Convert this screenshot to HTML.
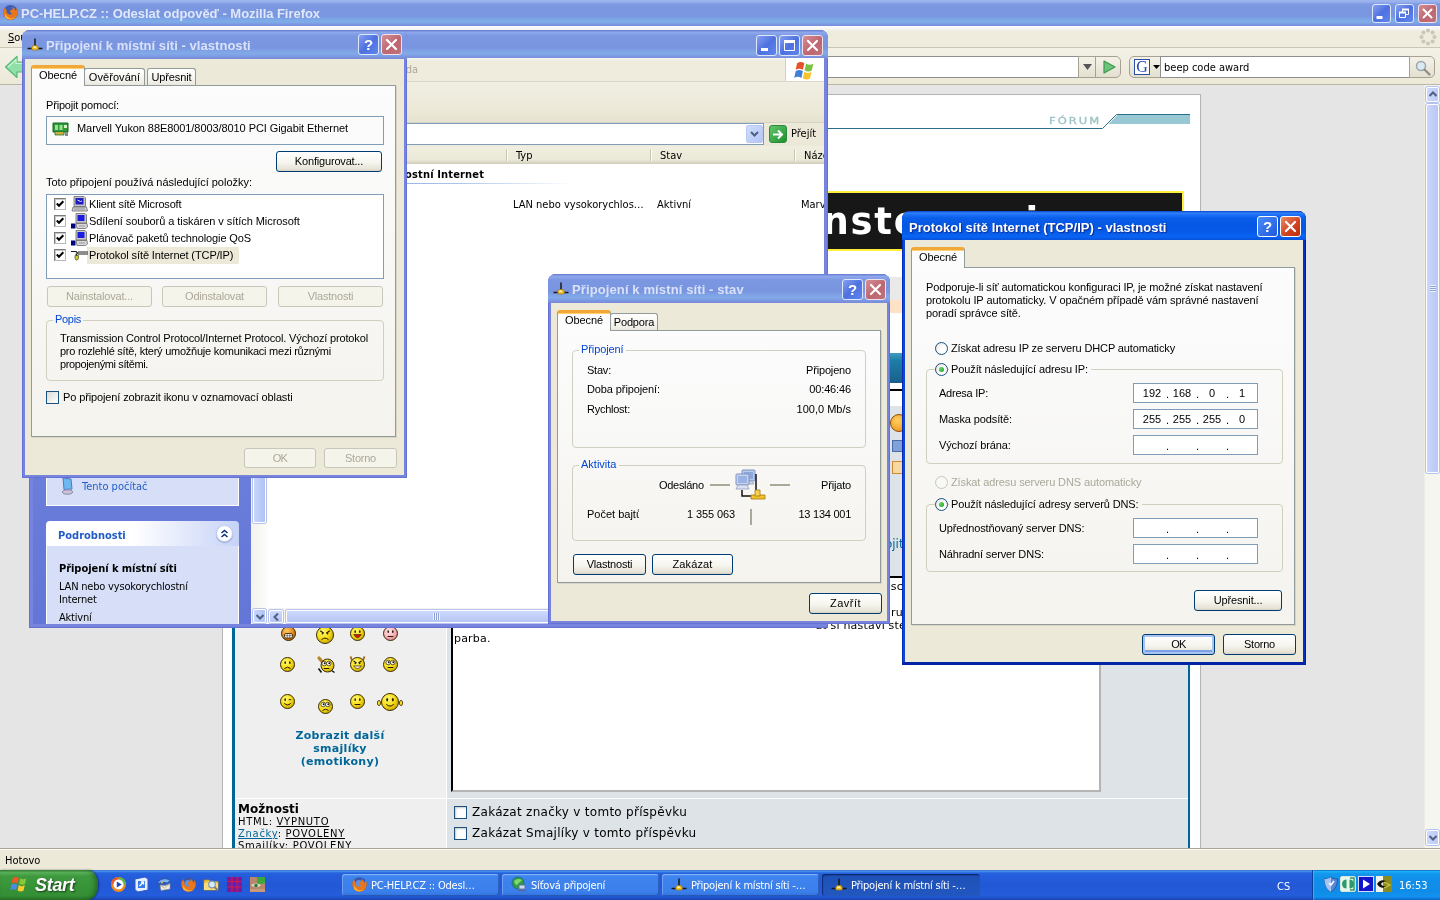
<!DOCTYPE html>
<html lang="cs">
<head>
<meta charset="utf-8">
<title>PC-HELP.CZ :: Odeslat odpověď - Mozilla Firefox</title>
<style>
*{box-sizing:border-box;margin:0;padding:0}
html,body{width:1440px;height:900px;overflow:hidden;background:#e5e5e5}
body{position:relative;font:11px "Liberation Sans",sans-serif;color:#000}
.a{position:absolute}
.t{position:absolute;white-space:nowrap;line-height:13px}
.tah{font-family:"DejaVu Sans Condensed","DejaVu Sans","Liberation Sans",sans-serif;font-size:11px}
.ver{font-family:"DejaVu Sans","Liberation Sans",sans-serif}
/* ---------- firefox ---------- */
#fftitle{left:0;top:0;width:1440px;height:26px;background:linear-gradient(#9db6ee 0,#98b1ec 2px,#7e9ae3 4px,#7b97e0 8px,#7a96e0 16px,#7ca6e6 19px,#7eade8 22px,#7c9ae2 24px,#7a8cdc 26px)}
#fftitle .cap{left:21px;top:5.500px;font:bold 13px/16px "Liberation Sans",sans-serif;color:#dfe7fa;letter-spacing:-.04px}
#ffmenu{left:0;top:26px;width:1440px;height:22px;background:linear-gradient(#fbfcfe 0,#f5f6f4 3px,#efecde 5px,#efecde 100%);border-bottom:1px solid #c9c6b8}
#fftool{left:0;top:48px;width:1440px;height:37px;background:linear-gradient(#f3f1e7,#ece9d8);border-bottom:1px solid #b9b6a7}
#ffcontent{left:0;top:85px;width:1424px;height:763px;background:#e5e5e5;overflow:hidden}
#ffscroll{left:1424px;top:85px;width:16px;height:763px;background:#f6f6f1;border-left:1px solid #eeede5}
#ffstatus{left:0;top:848px;width:1440px;height:22px;background:#ece9d8;border-top:1px solid #a9a698;box-shadow:inset 0 1px 0 #fbfaf5}
/* ---------- taskbar ---------- */
#taskbar{left:0;top:870px;width:1440px;height:30px;background:linear-gradient(#3168d5 0,#4993e6 4%,#2663e0 10%,#245ddb 20%,#2258d6 50%,#245ddb 85%,#1f4fc4 95%,#1941a5 100%)}
#start{left:0;top:0;width:98px;height:30px;border-radius:0 10px 10px 0/0 15px 15px 0;background:linear-gradient(#3c8a3c 0,#5bb55b 8%,#3f9a3f 20%,#379337 60%,#358f35 85%,#2b7a2b 100%);box-shadow:inset -3px 0 4px rgba(0,40,0,.35),1px 0 2px rgba(0,0,60,.5)}
#start .cap{left:35px;top:5px;font:italic bold 18px/20px "Liberation Sans",sans-serif;color:#fff;text-shadow:1px 1px 2px rgba(0,0,0,.6);letter-spacing:-.3px}
.task{position:absolute;top:4px;height:22px;border-radius:3px;background:linear-gradient(#5a9bf5 0,#3f84ee 12%,#3a7fea 80%,#3373de 100%);box-shadow:inset 1px 1px 0 rgba(255,255,255,.25),inset -1px -1px 0 rgba(0,0,60,.25);color:#fff}
.task.on{background:linear-gradient(#19449f 0,#1f52b8 15%,#2257c0 100%);box-shadow:inset 1px 1px 1px rgba(0,0,40,.5)}
.task .cap{left:29px;top:5px;color:#fff;letter-spacing:-.2px}
#tray{left:1312px;top:0;width:128px;height:30px;background:linear-gradient(#0c59b9 0,#19b0f5 5%,#1398ee 12%,#108fea 30%,#0f8ce8 70%,#1192ee 90%,#0a5fc0 100%);box-shadow:inset 1px 0 0 #0a3f9a,inset 2px 0 1px rgba(120,200,255,.5)}

/* ---------- XP windows ---------- */
.win{position:absolute;border-radius:8px 8px 0 0}
.win.in{background:#7684de;box-shadow:inset 0 0 0 1px #6672d2}
.win.ac{background:linear-gradient(90deg,#0d47dc 0,#0d47dc 50%,#0431c4 50%);box-shadow:inset 0 -3px 0 #0324a6,inset 1px 0 0 #0a2cb4,inset -1px 0 0 #001e98}
.tb{position:absolute;left:0;top:0;right:0;height:29px;border-radius:8px 8px 0 0}
.in .tb{background:linear-gradient(#6e83d6 0,#6e83d6 1px,#8fa9ec 2px,#86a1e8 4px,#7b97e1 6px,#7a95e0 18px,#7fa4e6 21px,#82a9e8 24px,#7d9ae4 26px,#7a8edc 28px,#788bda 29px)}
.ac .tb{background:linear-gradient(#0842c8 0,#2f80f8 7%,#1a6ef6 14%,#0a5fea 24%,#0558e4 45%,#0559e6 70%,#0a64f4 88%,#0753dc 100%)}
.tb .cap{position:absolute;top:7px;font:bold 13px/16px "Liberation Sans",sans-serif;white-space:nowrap}
.in .tb .cap{color:#d9e2f8}
.ac .tb .cap{color:#fff;text-shadow:1px 1px 1px #0a2a90}
.wb{position:absolute;left:3px;top:29px;right:3px;bottom:3px;background:#ece9d8}
.cb{position:absolute;width:21px;height:21px;border-radius:3px;border:1px solid #fff}
.in .cb{background:linear-gradient(135deg,#86a0f0 0,#4e71e0 50%,#5f86ec 100%);border-color:#dfe7fb}
.in .cb.x{background:linear-gradient(135deg,#d58e96 0,#bd6670 55%,#c0727c 100%);border-color:#f1e2ea}
.ac .cb{background:linear-gradient(135deg,#4b8cf8,#1f58dc)}
.ac .cb.x{background:linear-gradient(135deg,#ec8a6a,#d0401e 60%,#b8300f)}
.cb svg{position:absolute;left:0;top:0}
/* dialog widgets */
.pane{position:absolute;background:linear-gradient(#fcfcfd,#f4f3ee);border:1px solid #919b9c;box-shadow:1px 1px 0 #d8d5c6}
.tab{position:absolute;border:1px solid #919b9c;border-bottom:none;border-radius:3px 3px 0 0;background:linear-gradient(#fff,#f3f2ec 70%,#e9e7dc);text-align:center;line-height:14px}
.tab.sel{background:#fcfcfd;border-top:3px solid #f2a838;box-shadow:inset 0 1px 0 #ffd070;z-index:2}
.btn{position:absolute;border:1px solid #003c74;border-radius:3px;background:linear-gradient(#fff 0,#f6f5ee 55%,#e6e3d6 90%,#d6d0c4 100%);text-align:center;white-space:nowrap}
.btn.dis{border-color:#c9c7ba;background:#f5f4ea;color:#aca899}
.btn.def{box-shadow:inset 0 0 0 2px #a9c3f3,inset 0 -2px 0 2px #7da2e8}
.grp{position:absolute;border:1px solid #d0d0bf;border-radius:4px}
.gl{position:absolute;white-space:nowrap;line-height:13px;color:#0046d5;padding:0 2px}
.fld{position:absolute;border:1px solid #7f9db9;background:#fff}
.chk{position:absolute;width:13px;height:13px;border:1px solid #1c5180;background:linear-gradient(135deg,#dcdcd7,#fff)}
.rad{position:absolute;width:13px;height:13px;border-radius:50%;border:1px solid #1c5180;background:radial-gradient(circle at 65% 65%,#fff 30%,#dcdcd7)}
.rad.on::after{content:"";position:absolute;left:3px;top:3px;width:5px;height:5px;border-radius:50%;background:radial-gradient(circle at 35% 35%,#5fd35f,#1f9a1f)}
.rad.dis{border-color:#cac8bb;background:#f8f8f5}

/* ---------- firefox toolbar + page ---------- */
.ffbox{position:absolute;top:56px;height:22px;border:1px solid #8e8f8f;background:#fff}
.ffb{position:absolute;top:56px;height:22px;border:1px solid #a5a293;background:linear-gradient(#f4f2e8,#e3e0d0)}
#page{left:222px;top:9px;width:979px;height:760px;background:#fff;border:1px solid #b4b4b4;border-bottom:none}

/* ---------- explorer ---------- */
.sb{position:absolute;border-radius:2px;background:linear-gradient(90deg,#c6d5fc,#b9caf8 60%,#b0c1f3);border:1px solid #fff;box-shadow:0 0 0 1px #b4c3ee}
.sbh{background:linear-gradient(#cdd9fb,#c0cdf8 60%,#b7c5f3)}
.colh{position:absolute;top:146px;height:18px;background:linear-gradient(#efeee0 0,#ebead8 75%,#dedbca 88%,#cfcbb8 100%)}
</style>
</head>
<body>
<div id="root" style="position:absolute;left:0;top:0;width:1440px;height:900px;will-change:transform">
<!-- ================= FIREFOX WINDOW ================= -->
<div id="fftitle" class="a in">
  <svg class="a" style="left:2px;top:4px" width="17" height="17" viewBox="0 0 17 17"><circle cx="8.5" cy="8.5" r="7.5" fill="#3a5fb8"/><path d="M1 8.5a7.5 7.5 0 0 0 15 0c0-2-.6-3.6-1.6-4.8.3 1.500-.2 2.600-.8 3.200-.2-2-1.600-3.400-3.600-3.900 1 1 .9 2.200.2 2.800-1.200-.2-2.200.500-2.200 1.700 0 1.300 1.300 1.800 2.300 1.500-.5 1.300-2.200 1.900-3.700 1.200-1.600-.8-2.300-2.500-1.900-4.300C3.200 5.300 3 4 3.600 2.800 2 4.200 1 6.200 1 8.500z" fill="#e8761c"/><path d="M3.500 13.500a7.500 7.500 0 0 0 10.500-.5c-2 1.500-5 2-7.500.5-1.500-1-2.600-2.400-3-4 -.6 1.500-.6 2.800 0 4z" fill="#f7b63a"/></svg>
  <div class="t cap">PC-HELP.CZ :: Odeslat odpověď - Mozilla Firefox</div>
  <div class="cb" style="left:1372px;top:4px;width:19px;height:19px"><svg width="17" height="17"><rect x="3.500" y="11" width="6" height="3" fill="#fff"/></svg></div>
  <div class="cb" style="left:1395px;top:4px;width:19px;height:19px"><svg width="17" height="17"><path d="M6.500 4.500h6v5h-6z" fill="none" stroke="#fff" stroke-width="1"/><path d="M6 4.500h7" stroke="#fff" stroke-width="2"/><path d="M3.500 7.500h6v5h-6z" fill="#5577e2" stroke="#fff" stroke-width="1"/><path d="M3 7.500h7" stroke="#fff" stroke-width="2"/></svg></div>
  <div class="cb x" style="left:1418px;top:4px;width:19px;height:19px"><svg width="17" height="17"><path d="M4.500 4.500l8 8M12.500 4.500l-8 8" stroke="#fff" stroke-width="2" stroke-linecap="round"/></svg></div>
</div>
<div id="ffmenu" class="a"><div class="t tah" style="left:8px;top:5px"><u>S</u>oubor</div></div>
<div id="fftool" class="a"></div>
<svg class="a" style="left:4px;top:55px" width="22" height="24" viewBox="0 0 22 24"><path d="M1.500 12 13 1.500V7h8v10h-8v5.500z" fill="#8fdfa6" stroke="#53b873" stroke-width="1.200" stroke-linejoin="round"/><path d="M4 12l8-7.300V8.500h8" fill="none" stroke="#c9f3d4" stroke-width="1.200"/></svg>
<div class="ffbox" style="left:40px;width:1039px"></div>
<div class="ffb" style="left:1078px;width:18px"><svg class="a" style="left:4px;top:7px" width="9" height="6"><path d="M0 0h9L4.500 6z" fill="#555"/></svg></div>
<div class="ffb" style="left:1095px;width:26px;border-radius:0 5px 5px 0"><svg class="a" style="left:7px;top:3px" width="13" height="14"><path d="M1 1l11 6-11 6z" fill="#6fc27c" stroke="#3c9a4c" stroke-width="1.200" stroke-linejoin="round"/></svg></div>
<div class="ffb" style="left:1129px;width:32px;border-radius:5px 0 0 5px"><div class="a" style="left:4px;top:2px;width:16px;height:16px;background:#fff;border:1px solid #2b4ca8;font:16px/14px 'Liberation Serif',serif;color:#2244b8;text-align:center">G</div><svg class="a" style="left:23px;top:8px" width="7" height="4"><path d="M0 0h7L3.500 4z" fill="#000"/></svg></div>
<div class="ffbox" style="left:1160px;width:250px"><div class="t tah" style="left:3px;top:4px">beep code award</div></div>
<div class="ffb" style="left:1409px;width:26px;border-radius:0 5px 5px 0"><svg class="a" style="left:4px;top:2px" width="18" height="18" viewBox="0 0 18 18"><circle cx="7" cy="7" r="4.500" fill="#dbe9f2" stroke="#9aa7ad" stroke-width="1.500"/><path d="M10.500 10.500l5 5" stroke="#8d8d86" stroke-width="2.200" stroke-linecap="round"/></svg></div>
<svg class="a" style="left:1419px;top:28px" width="18" height="18" viewBox="0 0 18 18"><g fill="#c9c6b8"><circle cx="9" cy="2.500" r="2"/><circle cx="13.600" cy="4.400" r="2"/><circle cx="15.500" cy="9" r="2"/><circle cx="13.600" cy="13.600" r="2"/><circle cx="9" cy="15.500" r="2"/><circle cx="4.400" cy="13.600" r="2"/><circle cx="2.500" cy="9" r="2"/><circle cx="4.400" cy="4.400" r="2"/></g></svg>
<div id="ffcontent" class="a"><div class="a" style="left:0;top:-85px;width:1424px;height:900px">
<div id="page" class="a" style="top:94px"></div>
<!-- forum header -->
<div class="t ver" style="left:1048.500px;top:114.700px;font-size:9px;letter-spacing:1.600px;color:#9cc3c8;transform:scaleX(1.28);transform-origin:0 0;-webkit-text-stroke:.3px #9cc3c8">FÓRUM</div>
<svg class="a" style="left:232px;top:110px" width="960" height="22"><path d="M876.500 14L885.500 5H958V14z" fill="#98c8d3"/><path d="M0 18.500H870.500L884.500 4.500H958" fill="none" stroke="#2c6f8c" stroke-width="1"/></svg>
<!-- banner -->
<div class="a" style="left:560px;top:191px;width:624px;height:60px;background:#171717;border:2px solid #ffef3a;overflow:hidden"><div class="t ver" style="right:359.500px;top:1px;font:bold 37px/56px 'DejaVu Sans',sans-serif;letter-spacing:1.700px;color:#fff">Mo</div><div class="t ver" style="left:260.500px;top:1px;font:bold 37px/56px 'DejaVu Sans',sans-serif;letter-spacing:1.700px;color:#fff">nsterman</div><div class="t ver" style="left:463.500px;top:1px;font:bold 37px/56px 'DejaVu Sans',sans-serif;letter-spacing:1.700px;color:#fff">ia</div></div>
<!-- strip rows between dialogs -->
<div class="a" style="left:232px;top:277px;width:958px;height:23px;background:#e9e9e9"></div>
<div class="a" style="left:232px;top:300px;width:958px;height:13px;background:#ffe1c4"></div>
<div class="a" style="left:232px;top:353px;width:958px;height:30px;background:linear-gradient(#3f9cc0 0,#1c7ea8 25%,#1a5f8c 100%)"></div>
<div class="a" style="left:232px;top:389px;width:958px;height:2px;background:#000"></div>
<!-- post form table -->
<div class="a" style="left:232px;top:406px;width:958px;height:442px;background:#006699"></div>
<div class="a" style="left:235px;top:406px;width:211px;height:392px;background:#efefef"></div>
<div class="a" style="left:447px;top:406px;width:741px;height:392px;background:#dee3e7"></div>
<div class="a" style="left:235px;top:798px;width:953px;height:1px;background:#fff"></div>
<div class="a" style="left:446px;top:406px;width:1px;height:442px;background:#fff"></div>
<div class="a" style="left:235px;top:799px;width:211px;height:50px;background:#efefef"></div>
<div class="a" style="left:447px;top:799px;width:741px;height:50px;background:#dee3e7"></div>
<div class="a" style="left:890px;top:414px;width:18px;height:18px;border-radius:50%;background:radial-gradient(circle at 40% 35%,#ffd060,#f08a10);border:1px solid #8a4a00"></div>
<div class="a" style="left:892px;top:440px;width:12px;height:12px;background:#7fa0d8;border:1px solid #4a6aa8"></div>
<div class="a" style="left:892px;top:461px;width:12px;height:13px;background:#f6d9a0;border:1px solid #d08a30"></div>
<div class="t ver" style="left:862px;top:538px;font-size:12px;color:#006699">Připojit</div>
<!-- textarea -->
<div class="a" style="left:451px;top:576px;width:650px;height:216px;background:#fff;border:2px solid;border-color:#000 #b4b4b4 #b4b4b4 #000;overflow:hidden;font:11px/13px 'DejaVu Sans',sans-serif;letter-spacing:.2px">
<div class="t" style="right:196px;top:2px">Zkus si ve vlastnostech protokolu TCP/IP nastavit adresu ručně, tedy třeba 192.168.0.1 a sc</div>
<div class="t" style="left:1px;top:15px">masku 255.255.255.0, na druhém 192.168.0.2.</div>
<div class="t" style="right:196px;top:28px">Bránu ani DNS vyplňovat nemusíš, pokud přes ten počítač nesdílíš internet. Potom to zkus ru</div>
<div class="t" style="right:193px;top:41px">ať si nastaví ste</div>
<div class="t" style="left:1px;top:54px">parba.</div></div>
<!-- smilies -->
<svg class="a" width="0" height="0"><defs><radialGradient id="gy" cx=".38" cy=".32" r=".75"><stop offset="0" stop-color="#fff87a"/><stop offset=".5" stop-color="#f8e01c"/><stop offset="1" stop-color="#c8a000"/></radialGradient><radialGradient id="go" cx=".38" cy=".32" r=".75"><stop offset="0" stop-color="#ffc860"/><stop offset=".6" stop-color="#e88a1c"/><stop offset="1" stop-color="#a85a00"/></radialGradient><radialGradient id="gp" cx=".38" cy=".32" r=".75"><stop offset="0" stop-color="#ffe8ec"/><stop offset=".6" stop-color="#f8b0b8"/><stop offset="1" stop-color="#d87888"/></radialGradient></defs></svg><svg class="a" style="left:277.5px;top:622.5px" width="21" height="21" viewBox="-10.5 -10.5 21 21"><circle r="7.0" fill="url(#go)" stroke="#3a2c00" stroke-width="1"/><rect x="-4" y="0" width="8" height="4.500" rx="1.500" fill="#fff" stroke="#2a1a00" stroke-width=".8"/><path d="M-1.300 0v4.500M1.300 0v4.500M-4 2.200h8" stroke="#2a1a00" stroke-width=".5"/></svg><svg class="a" style="left:313.0px;top:623.0px" width="24" height="24" viewBox="-12.0 -12.0 24 24"><circle r="8.5" fill="url(#gy)" stroke="#3a2c00" stroke-width="1"/><path d="M-4.8 -4.2L-1.2 -1.8M4.8 -4.2L1.2 -1.8" stroke="#2a1a00" stroke-width="1.200"/><circle cx="-2.6" cy="-1.2" r=".8" fill="#2a1a00"/><circle cx="2.6" cy="-1.2" r=".8" fill="#2a1a00"/><path d="M-3.6 4.8Q0 1.4 3.6 4.8" fill="none" stroke="#2a1a00" stroke-width="1"/></svg><svg class="a" style="left:347.0px;top:623.0px" width="21" height="21" viewBox="-10.5 -10.5 21 21"><circle r="7.0" fill="url(#gy)" stroke="#3a2c00" stroke-width="1"/><ellipse cx="-2.3" cy="-1.8" rx="0.8" ry="1.4" fill="#2a1a00"/><ellipse cx="2.3" cy="-1.8" rx="0.8" ry="1.4" fill="#2a1a00"/><path d="M-3.800 1h7.600Q0 7.500 -3.800 1z" fill="#d81a0a" stroke="#2a1a00" stroke-width=".6"/></svg><svg class="a" style="left:380.0px;top:623.0px" width="21" height="21" viewBox="-10.5 -10.5 21 21"><circle r="7.0" fill="url(#gp)" stroke="#3a2c00" stroke-width="1"/><ellipse cx="-2.3" cy="-1.8" rx="0.8" ry="1.4" fill="#2a1a00"/><ellipse cx="2.3" cy="-1.8" rx="0.8" ry="1.4" fill="#2a1a00"/><path d="M-2.800 3h5.600" stroke="#2a1a00" stroke-width="1"/></svg><svg class="a" style="left:277.0px;top:654.0px" width="21" height="21" viewBox="-10.5 -10.5 21 21"><circle r="7.0" fill="url(#gy)" stroke="#3a2c00" stroke-width="1"/><ellipse cx="-2.3" cy="-1.8" rx="0.8" ry="1.4" fill="#2a1a00"/><ellipse cx="2.3" cy="-1.8" rx="0.8" ry="1.4" fill="#2a1a00"/><path d="M-3.0 4.0Q0 1.2 3.0 4.0" fill="none" stroke="#2a1a00" stroke-width="1"/></svg><svg class="a" style="left:315.5px;top:654.5px" width="21" height="21" viewBox="-10.5 -10.5 21 21"><path d="M-7.500 -7.500L3 5" stroke="#b8842a" stroke-width="3.200" stroke-linecap="round"/><path d="M-8 3l3 4M5 5l3 2" stroke="#111" stroke-width="1.500"/><circle cx="1" r="6.500" fill="url(#gy)" stroke="#3a2c00" stroke-width="1"/><circle cx="-2.300" cy="-2" r="2.300" fill="#fff" stroke="#2a1a00" stroke-width=".7"/><circle cx="2.300" cy="-2" r="2.300" fill="#fff" stroke="#2a1a00" stroke-width=".7"/><circle cx="-1.800" cy="-2.300" r="1" fill="#111"/><circle cx="2.800" cy="-2.300" r="1" fill="#111"/><path d="M-2.800 3h5.600" stroke="#2a1a00" stroke-width="1"/></svg><svg class="a" style="left:347.0px;top:654.0px" width="21" height="21" viewBox="-10.5 -10.5 21 21"><path d="M-7 -8l2 5M7 -8l-2 5" stroke="#a86a10" stroke-width="2"/><circle r="7.0" fill="url(#gy)" stroke="#3a2c00" stroke-width="1"/><path d="M-4.0 -3.5L-1.0 -1.5M4.0 -3.5L1.0 -1.5" stroke="#2a1a00" stroke-width="1.200"/><circle cx="-2.2" cy="-1.0" r=".8" fill="#2a1a00"/><circle cx="2.2" cy="-1.0" r=".8" fill="#2a1a00"/><path d="M-3.800 1.500h7.600Q0 6.500 -3.800 1.500z" fill="#fff" stroke="#2a1a00" stroke-width=".7"/></svg><svg class="a" style="left:380.0px;top:654.0px" width="21" height="21" viewBox="-10.5 -10.5 21 21"><circle r="7.0" fill="url(#gy)" stroke="#3a2c00" stroke-width="1"/><circle cx="-2.300" cy="-2" r="2.300" fill="#fff" stroke="#2a1a00" stroke-width=".7"/><circle cx="2.300" cy="-2" r="2.300" fill="#fff" stroke="#2a1a00" stroke-width=".7"/><circle cx="-1.800" cy="-2.300" r="1" fill="#111"/><circle cx="2.800" cy="-2.300" r="1" fill="#111"/><path d="M-2.800 3h5.600" stroke="#2a1a00" stroke-width="1"/></svg><svg class="a" style="left:277.0px;top:691.0px" width="21" height="21" viewBox="-10.5 -10.5 21 21"><circle r="7.0" fill="url(#gy)" stroke="#3a2c00" stroke-width="1"/><ellipse cx="-2.300" cy="-1.800" rx=".8" ry="1.400" fill="#2a1a00"/><path d="M1.200 -1.800h2.500" stroke="#2a1a00" stroke-width="1"/><path d="M-3.2 1.8Q0 5.0 3.2 1.8" fill="none" stroke="#2a1a00" stroke-width="1"/></svg><svg class="a" style="left:315.0px;top:696.0px" width="21" height="21" viewBox="-10.5 -10.5 21 21"><circle r="7.0" fill="url(#gy)" stroke="#3a2c00" stroke-width="1"/><circle cx="-2.300" cy="-2" r="2.300" fill="#fff" stroke="#2a1a00" stroke-width=".7"/><circle cx="2.300" cy="-2" r="2.300" fill="#fff" stroke="#2a1a00" stroke-width=".7"/><circle cx="-1.800" cy="-2.300" r="1" fill="#111"/><circle cx="2.800" cy="-2.300" r="1" fill="#111"/><path d="M-3.0 4.0Q0 1.2 3.0 4.0" fill="none" stroke="#2a1a00" stroke-width="1"/></svg><svg class="a" style="left:347.0px;top:691.0px" width="21" height="21" viewBox="-10.5 -10.5 21 21"><circle r="7.0" fill="url(#gy)" stroke="#3a2c00" stroke-width="1"/><ellipse cx="-2.3" cy="-1.8" rx="0.8" ry="1.4" fill="#2a1a00"/><ellipse cx="2.3" cy="-1.8" rx="0.8" ry="1.4" fill="#2a1a00"/><path d="M-2.800 3h5.600" stroke="#2a1a00" stroke-width="1"/></svg><svg class="a" style="left:376px;top:690.0px" width="28" height="24" viewBox="-14 -12 28 24"><ellipse cx="-11" cy="1" rx="1.600" ry="2.600" fill="#f8e01c" stroke="#3a2c00" stroke-width=".8"/><ellipse cx="11" cy="1" rx="1.600" ry="2.600" fill="#f8e01c" stroke="#3a2c00" stroke-width=".8"/><circle r="8.5" fill="url(#gy)" stroke="#3a2c00" stroke-width="1"/><ellipse cx="-2.8" cy="-2.2" rx="1.0" ry="1.7" fill="#2a1a00"/><ellipse cx="2.8" cy="-2.2" rx="1.0" ry="1.7" fill="#2a1a00"/><path d="M-3.8 2.2Q0 6.0 3.8 2.2" fill="none" stroke="#2a1a00" stroke-width="1"/></svg>

<div class="t ver" style="left:240px;top:729px;width:200px;text-align:center;white-space:normal;font:bold 11px/13px 'DejaVu Sans',sans-serif;letter-spacing:.3px;color:#006699">Zobrazit další<br>smajlíky<br>(emotikony)</div>
<div class="t ver" style="left:238px;top:802px;font:bold 12px/14px 'DejaVu Sans',sans-serif">Možnosti</div>
<div class="t ver" style="left:238px;top:816px;font-size:10px;line-height:12px;letter-spacing:.700px">HTML: <u>VYPNUTO</u><br><u style="color:#006699">Značky</u>: <u>POVOLENY</u><br>Smajlíky: <u>POVOLENY</u></div>
<div class="a" style="left:454px;top:806px;width:13px;height:13px;background:#fff;border:1px solid #1c5180;box-shadow:inset 1px 1px 2px #c8c8c0"></div>
<div class="a" style="left:454px;top:827px;width:13px;height:13px;background:#fff;border:1px solid #1c5180;box-shadow:inset 1px 1px 2px #c8c8c0"></div>
<div class="t ver" style="left:472px;top:805px;font-size:12px;line-height:15px;letter-spacing:.280px">Zakázat značky v tomto příspěvku</div>
<div class="t ver" style="left:472px;top:826px;font-size:12px;line-height:15px;letter-spacing:.280px">Zakázat Smajlíky v tomto příspěvku</div>
<div class="t ver" style="left:472px;top:847px;font-size:12px;line-height:15px;letter-spacing:.280px">Upozornit mě, když někdo odpoví</div>
</div></div>
<div id="ffscroll" class="a">
<div class="a" style="left:1px;top:2px;width:13px;height:15px;border-radius:2px;background:linear-gradient(90deg,#cdd9fb,#bccaf6);border:1px solid #fff;box-shadow:0 0 0 1px #b4c3ee"><svg class="a" style="left:2px;top:3px" width="8" height="6"><path d="M.500 5L4 1.500 7.500 5" fill="none" stroke="#4d6185" stroke-width="2"/></svg></div>
<div class="a" style="left:1px;top:19px;width:13px;height:369px;border-radius:2px;background:linear-gradient(90deg,#cbd7fb,#c0cdf8 60%,#b9c7f4);border:1px solid #fff;box-shadow:0 0 0 1px #b4c3ee"><div class="a" style="left:3px;top:180px;width:6px;height:7px;background:repeating-linear-gradient(#eef2ff 0,#eef2ff 1px,#8fa2da 1px,#8fa2da 2px)"></div></div>
<div class="a" style="left:1px;top:745px;width:13px;height:15px;border-radius:2px;background:linear-gradient(90deg,#cdd9fb,#bccaf6);border:1px solid #fff;box-shadow:0 0 0 1px #b4c3ee"><svg class="a" style="left:2px;top:4px" width="8" height="6"><path d="M.500 1L4 4.500 7.500 1" fill="none" stroke="#4d6185" stroke-width="2"/></svg></div>
</div>
<div id="ffstatus" class="a"><div class="t tah" style="left:5px;top:5px">Hotovo</div></div>

<!-- ================= TASKBAR ================= -->
<div id="taskbar" class="a">
  <div id="start" class="a"><svg class="a" style="left:10px;top:5px" width="20" height="19" viewBox="0 0 20 19"><path d="M2.800 3c2-1.400 4-1.400 6 0L7.600 8.500c-2-1.300-4-1.300-6 0z" fill="#f0582a"/><path d="M10.300 3.300c2 1.400 4 1.400 6 0L15.100 8.800c-2 1.400-4 1.400-6 0z" fill="#86c83c"/><path d="M1.300 9.800c2-1.400 4-1.400 6 0L6.100 15.300c-2-1.300-4-1.300-6 0z" fill="#4a8ae8"/><path d="M8.800 10.100c2 1.400 4 1.400 6 0L13.600 15.500c-2 1.400-4 1.400-6 0z" fill="#f8cc2c"/></svg><div class="t cap">Start</div></div>
  <div class="a" style="left:110px;top:6px"><svg width="17" height="17" viewBox="0 0 17 17"><circle cx="8.500" cy="8.500" r="7.500" fill="#f08a1c"/><path d="M8.500 1a7.500 7.500 0 0 1 7.500 7.500h-7.500z" fill="#58b848"/><path d="M1 8.500a7.500 7.500 0 0 1 7.500-7.500v7.500z" fill="#e8582a"/><circle cx="8.500" cy="8.500" r="5" fill="#fff"/><path d="M6.800 5.500l5 3-5 3z" fill="#1c48c8"/></svg></div><div class="a" style="left:133px;top:6px"><svg width="17" height="17" viewBox="0 0 17 17"><path d="M2 3l10-2 3 2v11l-10 2-3-2z" fill="#e8f0ff" stroke="#2a5ac8"/><path d="M5 5h7v7H5z" fill="#3a7ae8"/><path d="M6.500 10l4-4M8 6h2.500v2.500" stroke="#fff" stroke-width="1.300" fill="none"/></svg></div><div class="a" style="left:156px;top:6px"><svg width="17" height="17" viewBox="0 0 17 17"><circle cx="8.500" cy="8.500" r="7" fill="#2a5ab8"/><path d="M2 7c2-4 8-5 12-2-1 0-2 .5-2.500 1.500C9 5.500 5 6 2 7z" fill="#7fb2f0"/><path d="M4 9l5 .5 5-2v5.500l-9 1.500z" fill="#f0ece0" stroke="#8a8a9a" stroke-width=".6"/><path d="M4 9l4.500 3 5.500-4.500" fill="none" stroke="#8a8a9a" stroke-width=".6"/><circle cx="6" cy="6.500" r="1" fill="#f0b020"/></svg></div><div class="a" style="left:180px;top:6px"><svg width="17" height="17" viewBox="0 0 17 17"><circle cx="8.500" cy="8.500" r="7.300" fill="#3558b0"/><circle cx="8" cy="7.500" r="3.500" fill="#5f8fe0"/><path d="M1.200 8.500a7.300 7.300 0 0 0 14.600 0c0-2-.6-3.600-1.600-4.800.3 1.500-.2 2.600-.8 3.200-.2-2-1.600-3.400-3.600-3.900 1 1 .9 2.200.2 2.800-1.200-.2-2.200.5-2.200 1.700 0 1.300 1.300 1.800 2.300 1.500-.5 1.300-2.200 1.900-3.700 1.200-1.600-.8-2.300-2.500-1.900-4.300C3.400 5.300 3.200 4 3.800 2.800 2.200 4.200 1.200 6.200 1.200 8.500z" fill="#e8761c"/><path d="M3.500 13.500a7.300 7.300 0 0 0 10.500-.5c-2 1.500-5 2-7.500.5-1.500-1-2.600-2.400-3-4-.6 1.500-.6 2.800 0 4z" fill="#f7b63a"/></svg></div><div class="a" style="left:203px;top:6px"><svg width="17" height="17" viewBox="0 0 17 17"><path d="M1 4h5l1.500 1.500H15V14H1z" fill="#f2c84a" stroke="#b88a1a" stroke-width=".8"/><path d="M1 7h14v7H1z" fill="#f8dc78"/><circle cx="9" cy="8.500" r="3.300" fill="#d8ecf8" stroke="#7a9ab8" stroke-width="1.200"/><path d="M11.500 11l3 3" stroke="#7a7a7a" stroke-width="1.800"/></svg></div><div class="a" style="left:226px;top:6px"><svg width="17" height="17" viewBox="0 0 17 17"><rect x="1" y="1" width="15" height="15" fill="#7a1a9a"/><path d="M1 5.500h15M1 11h15M6 1v15M11 1v15" stroke="#d01a4a" stroke-width="1.200"/><circle cx="8.500" cy="8.500" r="2" fill="#3a2ad8"/></svg></div><div class="a" style="left:249px;top:6px"><svg width="17" height="17" viewBox="0 0 17 17"><rect x="1" y="1" width="15" height="15" fill="#b8866a"/><path d="M8 1h8v6l-8 2z" fill="#3aa83a"/><path d="M2 9c3-2 7-2 10 0-3 3-7 3-10 0z" fill="#e8d8c8"/><circle cx="7" cy="9.500" r="1.800" fill="#2a7a3a"/><path d="M1 13h15v3H1z" fill="#c89a7a"/></svg></div>
  <div class="task" style="left:342px;width:157px"><div class="a" style="left:9px;top:2px"><svg width="17" height="17" viewBox="0 0 17 17"><circle cx="8.500" cy="8.500" r="7.300" fill="#3558b0"/><circle cx="8" cy="7.500" r="3.500" fill="#5f8fe0"/><path d="M1.200 8.500a7.300 7.300 0 0 0 14.600 0c0-2-.6-3.600-1.600-4.800.3 1.500-.2 2.600-.8 3.200-.2-2-1.600-3.400-3.600-3.900 1 1 .9 2.200.2 2.800-1.200-.2-2.200.5-2.200 1.700 0 1.300 1.300 1.800 2.300 1.500-.5 1.300-2.200 1.900-3.700 1.200-1.600-.8-2.300-2.500-1.900-4.300C3.400 5.300 3.200 4 3.800 2.800 2.200 4.200 1.200 6.200 1.200 8.500z" fill="#e8761c"/><path d="M3.500 13.500a7.300 7.300 0 0 0 10.500-.5c-2 1.500-5 2-7.500.5-1.500-1-2.600-2.400-3-4-.6 1.500-.6 2.800 0 4z" fill="#f7b63a"/></svg></div><div class="t tah cap">PC-HELP.CZ :: Odesl…</div></div>
  <div class="task" style="left:502px;width:157px"><div class="a" style="left:9px;top:2px"><svg width="17" height="17" viewBox="0 0 17 17"><circle cx="7" cy="7" r="6" fill="#2f9a4a"/><path d="M3 5c2-2 5-3 8-1-1 2-3 2-4 4s-3 1-4-3z" fill="#7fd86a"/><circle cx="7" cy="7" r="6" fill="none" stroke="#1a6a8a" stroke-width=".8"/><path d="M8 9h6v4H8z" fill="#c8d8f0" stroke="#5a6a9a" stroke-width=".8"/><path d="M7 14.500h8" stroke="#5a6a9a" stroke-width="1.500"/></svg></div><div class="t tah cap">Síťová připojení</div></div>
  <div class="task" style="left:662px;width:157px"><div class="a" style="left:9px;top:3px"><svg width="16" height="16" viewBox="0 0 16 16"><path d="M8 1.500v8M.500 11.500h15" stroke="#1a1a1a" stroke-width="1.500"/><path d="M6 8.500h4l1.500 2.500-1 2h-5l-1-2z" fill="#f0c030" stroke="#a87808" stroke-width=".7"/><path d="M6.800 9.500h1.800l.4 1.500h-2.800z" fill="#fff6c0"/></svg></div><div class="t tah cap">Připojení k místní síti -…</div></div>
  <div class="task on" style="left:822px;width:158px"><div class="a" style="left:9px;top:3px"><svg width="16" height="16" viewBox="0 0 16 16"><path d="M8 1.500v8M.500 11.500h15" stroke="#1a1a1a" stroke-width="1.500"/><path d="M6 8.500h4l1.500 2.500-1 2h-5l-1-2z" fill="#f0c030" stroke="#a87808" stroke-width=".7"/><path d="M6.800 9.500h1.800l.4 1.500h-2.800z" fill="#fff6c0"/></svg></div><div class="t tah cap">Připojení k místní síti -…</div></div>
  <div class="t tah" style="left:1277px;top:10px;color:#fff">CS</div>
  <div id="tray" class="a"><div class="a" style="left:11px;top:6px"><svg width="16" height="17" viewBox="0 0 16 17"><path d="M8 1c2 1.500 4 2 6.500 2-.2 6-2 10-6.500 13C3.500 13 1.700 9 1.500 3 4 3 6 2.500 8 1z" fill="#5a86d8" stroke="#2a4a98" stroke-width=".8"/><path d="M8 1v15C3.500 13 1.700 9 1.500 3 4 3 6 2.500 8 1z" fill="#a8c4f0"/><path d="M6 7l2 2 3-4" stroke="#fff" stroke-width="1.500" fill="none"/></svg></div>
<div class="a" style="left:28px;top:6px;width:16px;height:16px;border-radius:2px;background:#e8f4ec;border:1px solid #cfe6d8"><svg width="14" height="14" viewBox="0 0 14 14"><path d="M5.500 2.500a4.500 4.500 0 0 0 0 9z" fill="#2a9a6a"/><path d="M8.500 2.500a4.500 4.500 0 0 1 0 9z" fill="#2a9a6a"/><path d="M9 1h4v12H9" fill="none" stroke="#2a9a6a" stroke-width="1.400"/></svg></div>
<div class="a" style="left:46px;top:6px;width:16px;height:16px;background:#1414c8;border:1px solid #d8d8f8"><svg width="14" height="14"><path d="M4 2.500l7 4.500-7 4.500z" fill="#fff"/></svg></div>
<div class="a" style="left:64px;top:6px;width:16px;height:16px;background:linear-gradient(90deg,#f4f4e8 45%,#8a8a20 45%)"><svg width="16" height="16" viewBox="0 0 16 16"><path d="M1 8c2-4 7-5 10-2-2-1-5 0-6 2 1 2 4 3 6 2-3 3-8 2-10-2z" fill="#111"/><path d="M8 6l6 3-6 3" fill="none" stroke="#c8c83a" stroke-width="1.200"/></svg></div><div class="t tah" style="left:87px;top:9px;color:#fff">16:53</div></div>
</div>

<!-- ================= EXPLORER: Síťová připojení ================= -->
<div class="win in" style="left:29px;top:30px;width:799px;height:598px">
 <div class="tb"></div>
 <div class="cb" style="left:727px;top:5px"><svg width="19" height="19"><rect x="4" y="12" width="7" height="3" fill="#fff"/></svg></div>
 <div class="cb" style="left:750px;top:5px"><svg width="19" height="19"><path d="M4.500 5.500h10v9h-10z" fill="none" stroke="#fff" stroke-width="1"/><path d="M4 5.500h11" stroke="#fff" stroke-width="3"/></svg></div>
 <div class="cb x" style="left:773px;top:5px"><svg width="19" height="19"><path d="M5 5l9 9M14 5l-9 9" stroke="#fff" stroke-width="2.200" stroke-linecap="round"/></svg></div>
</div>
<div class="a" style="left:33px;top:58px;width:791px;height:566px;background:#fff;overflow:hidden"><div class="a" style="left:-33px;top:-58px;width:900px;height:700px">
 <!-- menu -->
 <div class="a" style="left:33px;top:58px;width:791px;height:24px;background:linear-gradient(#f6f7f6 0,#f1efe4 2px,#efecde 4px);border-bottom:1px solid #dad7c8;box-shadow:0 1px 0 #faf9f3"></div>
 <div class="t tah" style="right:482px;top:63px;color:#aca899;word-spacing:9px">Soubor Úpravy Zobrazit Oblíbené Nástroje Upřesnit Nápověda</div>
 <div class="a" style="left:785px;top:58px;width:39px;height:23px;background:#fff;border-left:1px solid #d3d0c2"></div>
 <svg class="a" style="left:794px;top:59px" width="23" height="21" viewBox="0 0 19 17.500"><path d="M2.500 3.500c2-1.400 4-1.400 6 0L7.300 9c-2-1.300-4-1.300-6 0z" fill="#e8502a"/><path d="M10 3.800c2 1.400 4 1.400 6 0L14.800 9.300c-2 1.400-4 1.400-6 0z" fill="#7cc142"/><path d="M1 10.300c2-1.400 4-1.400 6 0L5.800 15.800c-2-1.300-4-1.300-6 0z" fill="#3f7fd8" transform="translate(.3 0)"/><path d="M8.500 10.600c2 1.400 4 1.400 6 0L13.300 16c-2 1.400-4 1.400-6 0z" fill="#f7c22a"/></svg>
 <!-- toolbar -->
 <div class="a" style="left:33px;top:82px;width:791px;height:40px;background:linear-gradient(#f1efe3,#ece9d8 70%,#e6e2cf)"></div>
 <!-- address bar -->
 <div class="a" style="left:33px;top:122px;width:791px;height:24px;background:#ece9d8;border-top:1px solid #d8d4c3"></div>
 <div class="a" style="left:90px;top:123px;width:674px;height:22px;background:#fff;border:1px solid #7f9db9"></div>
 <div class="a" style="left:746px;top:125px;width:17px;height:18px;border-radius:2px;background:linear-gradient(135deg,#cfdcfd,#b4c6f6);border:1px solid #b9c9f5"><svg class="a" style="left:3px;top:5px" width="9" height="7"><path d="M1 1l3.500 3.500L8 1" fill="none" stroke="#4d6185" stroke-width="2"/></svg></div>
 <div class="a" style="left:769px;top:125px;width:18px;height:18px;border-radius:3px;background:linear-gradient(135deg,#5fc76a,#1f8f2f);border:1px solid #2a8a3a"><svg class="a" style="left:2px;top:3px" width="12" height="11"><path d="M1 5.500h8M6 1.500l4 4-4 4" fill="none" stroke="#fff" stroke-width="2"/></svg></div>
 <div class="t tah" style="left:791px;top:127px">Přejít</div>
 <!-- sidebar -->
 <div class="a" style="left:33px;top:146px;width:218px;height:478px;background:linear-gradient(#7ba2e7,#6d80dc 60%,#6375d6)"></div>
 <div class="a" style="left:46px;top:300px;width:193px;height:206px;background:#d6dff7;border:1px solid #fff;border-top:none"></div>
 <svg class="a" style="left:60px;top:477px" width="16" height="18" viewBox="0 0 16 18"><path d="M3 1l8 1 1 10-8 .5z" fill="#6db8f0" stroke="#4a78c8"/><ellipse cx="7.500" cy="15" rx="5" ry="2.200" fill="#c9c2d8" stroke="#8a86a8"/></svg>
 <div class="t tah" style="left:82px;top:480px;color:#215dc6">Tento počítač</div>
 <div class="a" style="left:46px;top:521px;width:193px;height:25px;border-radius:4px 4px 0 0;background:linear-gradient(90deg,#fff 0,#fff 45%,#c6d3f7 100%)"></div>
 <div class="t tah" style="left:58px;top:529px;font-weight:bold;color:#215dc6">Podrobnosti</div>
 <div class="a" style="left:216px;top:525px;width:17px;height:17px;border-radius:50%;background:#fff;border:1px solid #c3cdf0;box-shadow:0 1px 1px #9aa8d8"><svg class="a" style="left:3px;top:3px" width="9" height="9"><path d="M1.500 4L4.500 1.500 7.500 4M1.500 8L4.500 5.500 7.500 8" fill="none" stroke="#0b2c7a" stroke-width="1.500"/></svg></div>
 <div class="a" style="left:46px;top:546px;width:193px;height:90px;background:#d6dff7;border:1px solid #fff;border-top:none"></div>
 <div class="t tah" style="left:59px;top:562px;font-weight:bold;letter-spacing:-.05px">Připojení k místní síti</div>
 <div class="t tah" style="left:59px;top:580px;letter-spacing:-.2px">LAN nebo vysokorychlostní<br>Internet</div>
 <div class="t tah" style="left:59px;top:611px;letter-spacing:-.2px">Aktivní</div>
 <!-- sidebar scrollbar -->
 <div class="a" style="left:251px;top:146px;width:17px;height:478px;background:linear-gradient(90deg,#f3f1ec,#fdfdfb)"></div>
 <div class="sb" style="left:253px;top:200px;width:13px;height:323px"></div>
 <div class="sb" style="left:253px;top:609px;width:13px;height:14px"><svg class="a" style="left:2px;top:4px" width="8" height="6"><path d="M.500 1L4 4.500 7.500 1" fill="none" stroke="#4d6185" stroke-width="2"/></svg></div>
 <!-- list view -->
 <div class="colh" style="left:268px;width:556px"></div>
 <div class="a" style="left:506px;top:149px;width:1px;height:12px;background:#c7c5b2;box-shadow:1px 0 0 #fff"></div>
 <div class="a" style="left:650px;top:149px;width:1px;height:12px;background:#c7c5b2;box-shadow:1px 0 0 #fff"></div>
 <div class="a" style="left:794px;top:149px;width:1px;height:12px;background:#c7c5b2;box-shadow:1px 0 0 #fff"></div>
 <div class="t tah" style="left:274px;top:149px">Název</div>
 <div class="t tah" style="left:516px;top:149px">Typ</div>
 <div class="t tah" style="left:660px;top:149px">Stav</div>
 <div class="t tah" style="left:804px;top:149px">Název zařízení</div>
 <div class="t tah" style="left:279px;top:168px;font-weight:bold;letter-spacing:.150px">LAN nebo vysokorychlostní Internet</div>
 <div class="a" style="left:274px;top:183px;width:300px;height:1px;background:linear-gradient(90deg,#6e94dc,#a9c2ee 60%,#fff)"></div>
 <div class="t tah" style="left:296px;top:198px">Připojení k místní síti</div>
 <div class="t tah" style="left:513px;top:198px">LAN nebo vysokorychlos…</div>
 <div class="t tah" style="left:657px;top:198px">Aktivní</div>
 <div class="t tah" style="left:801px;top:198px">Marvell Yukon 88E8001</div>
 <!-- h scrollbar -->
 <div class="a" style="left:268px;top:608px;width:556px;height:16px;background:linear-gradient(#f3f1ec,#fdfdfb)"></div>
 <div class="sb sbh" style="left:269px;top:610px;width:14px;height:13px"><svg class="a" style="left:3px;top:2px" width="6" height="8"><path d="M5 .500L1.500 4 5 7.500" fill="none" stroke="#4d6185" stroke-width="2"/></svg></div>
 <div class="sb sbh" style="left:286px;top:610px;width:300px;height:13px"><div class="a" style="left:146px;top:2px;width:7px;height:7px;background:repeating-linear-gradient(90deg,#eef2ff 0,#eef2ff 1px,#8fa2da 1px,#8fa2da 2px)"></div></div>
</div></div>
<!--DLG-->
<!-- ================= DIALOG: stav ================= -->
<div class="win in" style="left:548px;top:274px;width:342px;height:350px">
 <div class="tb"><div class="a" style="left:5px;top:7px"><svg width="16" height="16" viewBox="0 0 16 16"><path d="M8 1.500v8M.500 11.500h15" stroke="#1a1a1a" stroke-width="1.500"/><path d="M6 8.500h4l1.500 2.500-1 2h-5l-1-2z" fill="#f0c030" stroke="#a87808" stroke-width=".7"/><path d="M6.800 9.500h1.800l.4 1.500h-2.800z" fill="#fff6c0"/></svg></div><div class="cap" style="left:24px;top:8px;letter-spacing:0.114px">Připojení k místní síti - stav</div></div>
 <div class="wb"></div>
 <div class="cb" style="left:294px;top:5px"><svg width="19" height="19"><text x="9.500" y="15" text-anchor="middle" font-family="Liberation Sans" font-weight="bold" font-size="15" fill="#fff">?</text></svg></div>
 <div class="cb x" style="left:317px;top:5px"><svg width="19" height="19"><path d="M5 5l9 9M14 5l-9 9" stroke="#fff" stroke-width="2.200" stroke-linecap="round"/></svg></div>
</div><div class="pane" style="left:557px;top:330px;width:324px;height:253px"></div><div class="tab sel" style="left:557px;top:310px;width:54px;height:21px;padding-top:0px;letter-spacing:-.1px"><span style="letter-spacing:-0.055px">Obecné</span></div><div class="tab" style="left:610px;top:313px;width:48px;height:17px;padding-top:1px;letter-spacing:-.1px"><span style="letter-spacing:-0.156px">Podpora</span></div><div class="grp" style="left:572px;top:350px;width:294px;height:98px"></div><div class="gl" style="left:579px;top:343px;background:#fbfbfc;"><span style="letter-spacing:-0.102px">Připojení</span></div><div class="t" style="left:587px;top:364px;letter-spacing:-.1px;"><span style="letter-spacing:-0.216px">Stav:</span></div><div class="t" style="left:587px;top:383px;letter-spacing:-.1px;"><span style="letter-spacing:-0.107px">Doba připojení:</span></div><div class="t" style="left:587px;top:403px;letter-spacing:-.1px;"><span style="letter-spacing:-0.250px">Rychlost:</span></div><div class="t" style="right:589px;top:364px;letter-spacing:-.1px;"><span style="letter-spacing:-0.165px">Připojeno</span></div><div class="t" style="right:589px;top:383px;letter-spacing:-.1px;"><span style="letter-spacing:-0.135px">00:46:46</span></div><div class="t" style="right:589px;top:403px;letter-spacing:-.1px;"><span style="letter-spacing:0.008px">100,0 Mb/s</span></div><div class="grp" style="left:572px;top:465px;width:294px;height:76px"></div><div class="gl" style="left:579px;top:458px;background:#f8f7f5;"><span style="letter-spacing:0.004px">Aktivita</span></div><div class="t" style="left:659px;top:479px;letter-spacing:-.1px;"><span style="letter-spacing:-0.293px">Odesláno</span></div><div class="t" style="right:589px;top:479px;letter-spacing:-.1px;"><span style="letter-spacing:-0.170px">Přijato</span></div><div class="a" style="left:710px;top:484px;width:20px;height:2px;background:#aca899"></div><div class="a" style="left:770px;top:484px;width:20px;height:2px;background:#aca899"></div><svg class="a" style="left:734px;top:468px" width="34" height="36" viewBox="0 0 34 36"><rect x="8" y="2" width="13" height="11" rx="1" fill="#b9c9e8" stroke="#7f93c4"/><rect x="10" y="4" width="9" height="7" fill="#8ea6dc"/><path d="M11 13h7l2 3H9z" fill="#cfd6e8" stroke="#8a96b8" stroke-width=".7"/><rect x="2" y="6" width="13" height="11" rx="1" fill="#c6d3ee" stroke="#7f93c4"/><rect x="4" y="8" width="9" height="7" fill="#9bb2e4"/><path d="M4 17h9l2 4H2z" fill="#dbe1f0" stroke="#8a96b8" stroke-width=".7"/><path d="M22 6v18M8 22v6h12" fill="none" stroke="#111" stroke-width="1.500"/><path d="M17 27h14v4H17z" fill="#f2c230" stroke="#a87808" stroke-width=".8"/><path d="M21 22h5v6h-5z" fill="#f6d250" stroke="#a87808" stroke-width=".8"/></svg><div class="t" style="left:587px;top:508px;letter-spacing:-.1px;width:52px;overflow:hidden"><span style="letter-spacing:-0.004px">Počet bajtů</span></div><div class="t" style="right:705px;top:508px;letter-spacing:-.1px;"><span style="letter-spacing:-0.104px">1 355 063</span></div><div class="t" style="right:589px;top:508px;letter-spacing:-.1px;"><span style="letter-spacing:-0.256px">13 134 001</span></div><div class="a" style="left:750px;top:509px;width:2px;height:16px;background:#aca899"></div><div class="btn " style="left:573px;top:554px;width:73px;height:21px;line-height:19px"><span style="letter-spacing:-0.220px">Vlastnosti</span></div><div class="btn " style="left:652px;top:554px;width:81px;height:21px;line-height:19px"><span style="letter-spacing:0.123px">Zakázat</span></div><div class="btn " style="left:809px;top:593px;width:73px;height:21px;line-height:19px"><span style="letter-spacing:0.479px">Zavřít</span></div>
<!-- ================= DIALOG: vlastnosti ================= -->
<div class="win in" style="left:22px;top:30px;width:385px;height:448px">
 <div class="tb"><div class="a" style="left:5px;top:7px"><svg width="16" height="16" viewBox="0 0 16 16"><path d="M8 1.500v8M.500 11.500h15" stroke="#1a1a1a" stroke-width="1.500"/><path d="M6 8.500h4l1.500 2.500-1 2h-5l-1-2z" fill="#f0c030" stroke="#a87808" stroke-width=".7"/><path d="M6.800 9.500h1.800l.4 1.500h-2.800z" fill="#fff6c0"/></svg></div><div class="cap" style="left:24px;top:8px;letter-spacing:0.047px">Připojení k místní síti - vlastnosti</div></div>
 <div class="wb"></div>
 <div class="cb" style="left:336px;top:4px"><svg width="19" height="19"><text x="9.500" y="15" text-anchor="middle" font-family="Liberation Sans" font-weight="bold" font-size="15" fill="#fff">?</text></svg></div>
 <div class="cb x" style="left:359px;top:4px"><svg width="19" height="19"><path d="M5 5l9 9M14 5l-9 9" stroke="#fff" stroke-width="2.200" stroke-linecap="round"/></svg></div>
</div><div class="pane" style="left:31px;top:85px;width:365px;height:352px"></div><div class="tab sel" style="left:31px;top:65px;width:54px;height:21px;padding-top:0px;letter-spacing:-.1px"><span style="letter-spacing:-0.055px">Obecné</span></div><div class="tab" style="left:84px;top:68px;width:61px;height:17px;padding-top:1px;letter-spacing:-.1px"><span style="letter-spacing:0.061px">Ověřování</span></div><div class="tab" style="left:147px;top:68px;width:49px;height:17px;padding-top:1px;letter-spacing:-.1px"><span style="letter-spacing:-0.121px">Upřesnit</span></div><div class="t" style="left:46px;top:99px;letter-spacing:-.1px;"><span style="letter-spacing:-0.176px">Připojit pomocí:</span></div><div class="fld" style="left:46px;top:116px;width:338px;height:29px;background:transparent"></div><svg class="a" style="left:52px;top:121px" width="18" height="16" viewBox="0 0 18 16"><path d="M1 2h15v9H1z" fill="#2f9a3a" stroke="#14661e"/><path d="M3 4h3v5H3zM7.500 4h3v5h-3z" fill="#9be08f"/><path d="M12 4h3v3h-3z" fill="#d8f2c8"/><path d="M3 11v3h9v-3" fill="#c8b040" stroke="#14661e" stroke-width=".7"/><path d="M13 11v4h3v-4" fill="#888" /></svg><div class="t" style="left:77px;top:122px;letter-spacing:-.1px;"><span style="letter-spacing:-0.077px">Marvell Yukon 88E8001/8003/8010 PCI Gigabit Ethernet</span></div><div class="btn " style="left:276px;top:151px;width:106px;height:21px;line-height:19px"><span style="letter-spacing:-0.176px">Konfigurovat...</span></div><div class="t" style="left:46px;top:176px;letter-spacing:-.1px;"><span style="letter-spacing:-0.016px">Toto připojení používá následující položky:</span></div><div class="fld" style="left:46px;top:194px;width:338px;height:85px;"></div><div class="a" style="left:87px;top:247px;width:152px;height:17px;background:#ece9d8"></div><div class="a" style="left:54px;top:198px;width:12px;height:12px;background:#fff;border:1px solid;border-color:#7a7a7a #b8b8b8 #b8b8b8 #7a7a7a;box-shadow:inset 1px 1px 0 #c8c8c8"><svg width="10" height="10" style="position:absolute;left:0;top:0"><path d="M1.800 4.500L4 6.800 8.300 2.200" fill="none" stroke="#000" stroke-width="2"/></svg></div><svg class="a" style="left:71px;top:196px" width="17" height="16" viewBox="0 0 17 16"><path d="M3 .500h10l1.500 1.500v8.500H3z" fill="#c8c8c8" stroke="#6a6a6a" stroke-width=".8"/><rect x="4.500" y="2" width="8" height="6.500" fill="#1c1cc0"/><path d="M6.500 4l3 1.500 1.500-.5" stroke="#e8e8ff" stroke-width="1" fill="none"/><path d="M2 11h13.500l1 4H1z" fill="#d0d0d0" stroke="#6a6a6a" stroke-width=".8"/><path d="M3 13h11" stroke="#8a8a8a" stroke-width=".8"/></svg><div class="t" style="left:89px;top:198px;letter-spacing:-.1px;"><span style="letter-spacing:-0.171px">Klient sítě Microsoft</span></div><div class="a" style="left:54px;top:215px;width:12px;height:12px;background:#fff;border:1px solid;border-color:#7a7a7a #b8b8b8 #b8b8b8 #7a7a7a;box-shadow:inset 1px 1px 0 #c8c8c8"><svg width="10" height="10" style="position:absolute;left:0;top:0"><path d="M1.800 4.500L4 6.800 8.300 2.200" fill="none" stroke="#000" stroke-width="2"/></svg></div><svg class="a" style="left:71px;top:213px" width="17" height="16" viewBox="0 0 17 16"><path d="M5 .500h9l1.500 1.500v8H5z" fill="#c8c8c8" stroke="#6a6a6a" stroke-width=".8"/><rect x="6.500" y="2" width="7" height="6" fill="#1c1ce0"/><path d="M5 10.500h11l.5 3.500-2 1.500H6z" fill="#d8d8d8" stroke="#6a6a6a" stroke-width=".8"/><path d="M8 13h6" stroke="#8a8a8a" stroke-width=".8"/><path d="M0 10.500h4.500v5H0z" fill="#00007c"/></svg><div class="t" style="left:89px;top:215px;letter-spacing:-.1px;"><span style="letter-spacing:-0.057px">Sdílení souborů a tiskáren v sítích Microsoft</span></div><div class="a" style="left:54px;top:232px;width:12px;height:12px;background:#fff;border:1px solid;border-color:#7a7a7a #b8b8b8 #b8b8b8 #7a7a7a;box-shadow:inset 1px 1px 0 #c8c8c8"><svg width="10" height="10" style="position:absolute;left:0;top:0"><path d="M1.800 4.500L4 6.800 8.300 2.200" fill="none" stroke="#000" stroke-width="2"/></svg></div><svg class="a" style="left:71px;top:230px" width="17" height="16" viewBox="0 0 17 16"><path d="M5 .500h9l1.500 1.500v8H5z" fill="#c8c8c8" stroke="#6a6a6a" stroke-width=".8"/><rect x="6.500" y="2" width="7" height="6" fill="#1c1ce0"/><path d="M5 10.500h11l.5 3.500-2 1.500H6z" fill="#d8d8d8" stroke="#6a6a6a" stroke-width=".8"/><path d="M8 13h6" stroke="#8a8a8a" stroke-width=".8"/><path d="M0 10.500h4.500v5H0z" fill="#00007c"/></svg><div class="t" style="left:89px;top:232px;letter-spacing:-.1px;"><span style="letter-spacing:-0.120px">Plánovač paketů technologie QoS</span></div><div class="a" style="left:54px;top:249px;width:12px;height:12px;background:#fff;border:1px solid;border-color:#7a7a7a #b8b8b8 #b8b8b8 #7a7a7a;box-shadow:inset 1px 1px 0 #c8c8c8"><svg width="10" height="10" style="position:absolute;left:0;top:0"><path d="M1.800 4.500L4 6.800 8.300 2.200" fill="none" stroke="#000" stroke-width="2"/></svg></div><svg class="a" style="left:71px;top:247px" width="17" height="16" viewBox="0 0 17 16"><path d="M0 4.500h5l2 2M7 5h10M7 7h10" fill="none" stroke="#1a1a1a" stroke-width="1.100"/><path d="M5.500 6.500v3" stroke="#1a1a1a" stroke-width="1.600"/><path d="M4 8.500h3.500v3l-1 1.500h-1.500l-1-1.500z" fill="#c8c83a" stroke="#55551a" stroke-width=".7"/></svg><div class="t" style="left:89px;top:249px;letter-spacing:-.1px;"><span style="letter-spacing:-0.095px">Protokol sítě Internet (TCP/IP)</span></div><div class="btn dis" style="left:47px;top:286px;width:105px;height:21px;line-height:19px"><span style="letter-spacing:-0.180px">Nainstalovat...</span></div><div class="btn dis" style="left:162px;top:286px;width:105px;height:21px;line-height:19px"><span style="letter-spacing:-0.180px">Odinstalovat</span></div><div class="btn dis" style="left:278px;top:286px;width:105px;height:21px;line-height:19px"><span style="letter-spacing:-0.220px">Vlastnosti</span></div><div class="grp" style="left:46px;top:320px;width:338px;height:61px"></div><div class="gl" style="left:53px;top:313px;background:#f7f6f3;"><span style="letter-spacing:-0.306px">Popis</span></div><div class="t" style="left:60px;top:332px;letter-spacing:-.1px;"><span style="letter-spacing:-0.157px">Transmission Control Protocol/Internet Protocol. Výchozí protokol</span><br><span style="letter-spacing:-0.244px">pro rozlehlé sítě, který umožňuje komunikaci mezi různými</span><br><span style="letter-spacing:-0.388px">propojenými sítěmi.</span></div><div class="chk" style="left:46px;top:391px;"></div><div class="t" style="left:63px;top:391px;letter-spacing:-.1px;"><span style="letter-spacing:-0.123px">Po připojení zobrazit ikonu v oznamovací oblasti</span></div><div class="btn dis" style="left:244px;top:448px;width:72px;height:20px;line-height:18px"><span style="letter-spacing:-0.603px">OK</span></div><div class="btn dis" style="left:324px;top:448px;width:73px;height:20px;line-height:18px"><span style="letter-spacing:-0.237px">Storno</span></div>
<!-- ================= DIALOG: TCP/IP ================= -->
<div class="win ac" style="left:902px;top:211px;width:404px;height:454px">
 <div class="tb"><div class="cap" style="left:7px;top:8.5px;letter-spacing:0.022px">Protokol sítě Internet (TCP/IP) - vlastnosti</div></div>
 <div class="wb"></div>
 <div class="cb" style="left:355px;top:5px"><svg width="19" height="19"><text x="9.500" y="15" text-anchor="middle" font-family="Liberation Sans" font-weight="bold" font-size="15" fill="#fff">?</text></svg></div>
 <div class="cb x" style="left:378px;top:5px"><svg width="19" height="19"><path d="M5 5l9 9M14 5l-9 9" stroke="#fff" stroke-width="2.200" stroke-linecap="round"/></svg></div>
</div><div class="pane" style="left:911px;top:267px;width:384px;height:358px"></div><div class="tab sel" style="left:911px;top:247px;width:54px;height:21px;padding-top:0px;letter-spacing:-.1px"><span style="letter-spacing:-0.055px">Obecné</span></div><div class="t" style="left:926px;top:281px;letter-spacing:-.1px;"><span style="letter-spacing:-0.115px">Podporuje-li síť automatickou konfiguraci IP, je možné získat nastavení</span><br><span style="letter-spacing:-0.091px">protokolu IP automaticky. V opačném případě vám správné nastavení</span><br><span style="letter-spacing:-0.090px">poradí správce sítě.</span></div><div class="rad " style="left:934.5px;top:341.5px"></div><div class="t" style="left:951px;top:342px;letter-spacing:-.1px;"><span style="letter-spacing:-0.138px">Získat adresu IP ze serveru DHCP automaticky</span></div><div class="grp" style="left:926px;top:369px;width:357px;height:95px"></div><div class="rad on" style="left:934.5px;top:363.0px"></div><div class="t" style="left:949px;top:363px;letter-spacing:-.1px;background:#faf9f9;padding:0 3px 0 2px"><span style="letter-spacing:-0.105px">Použít následující adresu IP:</span></div><div class="t" style="left:939px;top:387px;letter-spacing:-.1px;"><span style="letter-spacing:-0.236px">Adresa IP:</span></div><div class="fld" style="left:1133px;top:383px;width:125px;height:20px;"><div class="t" style="left:32px;top:4px">.</div><div class="t" style="left:62px;top:4px">.</div><div class="t" style="left:92px;top:4px">.</div><div class="t" style="left:5px;width:26px;text-align:center;top:3px">192</div><div class="t" style="left:35px;width:26px;text-align:center;top:3px">168</div><div class="t" style="left:65px;width:26px;text-align:center;top:3px">0</div><div class="t" style="left:95px;width:26px;text-align:center;top:3px">1</div></div><div class="t" style="left:939px;top:413px;letter-spacing:-.1px;"><span style="letter-spacing:-0.114px">Maska podsítě:</span></div><div class="fld" style="left:1133px;top:409px;width:125px;height:20px;"><div class="t" style="left:32px;top:4px">.</div><div class="t" style="left:62px;top:4px">.</div><div class="t" style="left:92px;top:4px">.</div><div class="t" style="left:5px;width:26px;text-align:center;top:3px">255</div><div class="t" style="left:35px;width:26px;text-align:center;top:3px">255</div><div class="t" style="left:65px;width:26px;text-align:center;top:3px">255</div><div class="t" style="left:95px;width:26px;text-align:center;top:3px">0</div></div><div class="t" style="left:939px;top:439px;letter-spacing:-.1px;"><span style="letter-spacing:-0.120px">Výchozí brána:</span></div><div class="fld" style="left:1133px;top:435px;width:125px;height:20px;"><div class="t" style="left:32px;top:4px">.</div><div class="t" style="left:62px;top:4px">.</div><div class="t" style="left:92px;top:4px">.</div></div><div class="rad dis" style="left:934.5px;top:475.5px"></div><div class="t" style="left:951px;top:476px;letter-spacing:-.1px;color:#aca899"><span style="letter-spacing:-0.106px">Získat adresu serveru DNS automaticky</span></div><div class="grp" style="left:926px;top:504px;width:357px;height:68px"></div><div class="rad on" style="left:934.5px;top:497.5px"></div><div class="t" style="left:949px;top:498px;letter-spacing:-.1px;background:#f7f6f3;padding:0 3px 0 2px"><span style="letter-spacing:-0.118px">Použít následující adresy serverů DNS:</span></div><div class="t" style="left:939px;top:522px;letter-spacing:-.1px;"><span style="letter-spacing:-0.137px">Upřednostňovaný server DNS:</span></div><div class="fld" style="left:1133px;top:518px;width:125px;height:20px;"><div class="t" style="left:32px;top:4px">.</div><div class="t" style="left:62px;top:4px">.</div><div class="t" style="left:92px;top:4px">.</div></div><div class="t" style="left:939px;top:548px;letter-spacing:-.1px;"><span style="letter-spacing:-0.161px">Náhradní server DNS:</span></div><div class="fld" style="left:1133px;top:544px;width:125px;height:20px;"><div class="t" style="left:32px;top:4px">.</div><div class="t" style="left:62px;top:4px">.</div><div class="t" style="left:92px;top:4px">.</div></div><div class="btn " style="left:1194px;top:590px;width:88px;height:21px;line-height:19px"><span style="letter-spacing:-0.140px">Upřesnit...</span></div><div class="btn def" style="left:1142px;top:634px;width:73px;height:21px;line-height:19px"><span style="letter-spacing:-0.603px">OK</span></div><div class="btn " style="left:1223px;top:634px;width:73px;height:21px;line-height:19px"><span style="letter-spacing:-0.237px">Storno</span></div>
<!--/DLG-->
</div>
</body>
</html>
